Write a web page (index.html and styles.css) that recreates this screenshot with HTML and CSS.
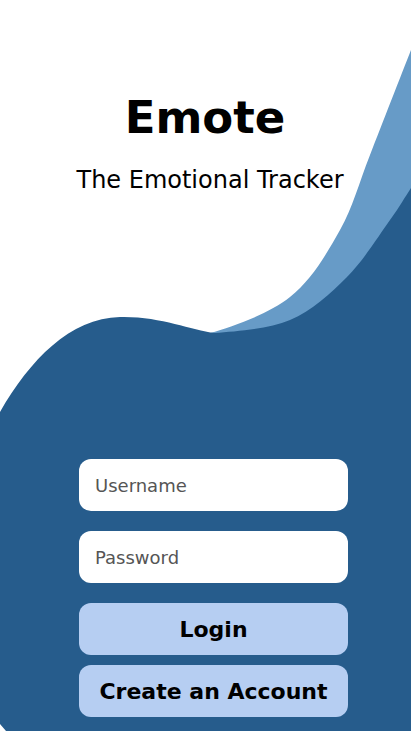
FILE: index.html
```html
<!DOCTYPE html>
<html lang="en">
<head>
<meta charset="utf-8">
<title>Emote</title>
<link rel="stylesheet" href="styles.css">
</head>
<body>
<div class="screen">
  <svg class="waves" width="411" height="731" viewBox="0 0 411 731" aria-hidden="true">
    <path class="wave-light" d="M205,334 L210,333 C233,326.5 268.3,314.2 290,297 C311.7,279.8 326.7,253.7 340,230 C353.3,206.3 358.2,185 370,155 C381.8,125 401.8,73.3 411,50 L411,731 L205,731 Z"/>
    <path class="wave-dark" d="M0,412 C30,360 70,318 120,317 C160,316 190,330 215,333 C235,331.3 268,329.3 290,320 C312,310.7 330.3,293.7 347,277 C363.7,260.3 379.3,234.8 390,220 C400.7,205.2 404.3,198 411,188 L411,731 L6,731 L0,724 Z"/>
  </svg>
  <div class="content">
    <header class="brand">
      <h1 class="title">Emote</h1>
      <p class="subtitle">The Emotional Tracker</p>
    </header>
    <form class="login-form">
      <div class="fields">
        <input class="field" type="text" placeholder="Username">
        <input class="field" type="password" placeholder="Password">
      </div>
      <div class="actions">
        <button class="btn" type="button">Login</button>
        <button class="btn" type="button">Create an Account</button>
      </div>
    </form>
  </div>
</div>
</body>
</html>
```

FILE: styles.css
```css
* {
  box-sizing: border-box;
}

html, body {
  margin: 0;
  padding: 0;
  background: #ffffff;
}

body {
  font-family: "DejaVu Sans", "Liberation Sans", sans-serif;
  color: #000000;
}

.screen {
  position: relative;
  width: 411px;
  height: 731px;
  overflow: hidden;
  background: #ffffff;
}

.waves {
  position: absolute;
  left: 0;
  top: 0;
  display: block;
}

.wave-light {
  fill: #679bc7;
}

.wave-dark {
  fill: #265c8c;
}

.content {
  position: relative;
  z-index: 1;
  display: flex;
  flex-direction: column;
}

.brand {
  display: flex;
  flex-direction: column;
  align-items: center;
  padding-top: 95px;
}

.title {
  margin: 0;
  font-size: 45px;
  line-height: 45px;
  font-weight: 700;
  letter-spacing: 0;
  padding-right: 1px;
}

.subtitle {
  margin: 28px 0 0 0;
  font-size: 24px;
  line-height: 24px;
  font-weight: 400;
  padding-left: 9px;
}

.login-form {
  margin: 267px 0 0 79px;
  width: 269px;
  display: flex;
  flex-direction: column;
  gap: 20px;
}

.fields {
  display: flex;
  flex-direction: column;
  gap: 20px;
}

.field {
  width: 269px;
  height: 52px;
  border: none;
  border-radius: 12px;
  background: #ffffff;
  padding: 0 16px;
  font-family: "DejaVu Sans", "Liberation Sans", sans-serif;
  font-size: 18px;
  color: #333333;
  outline: none;
}

.field::placeholder {
  color: #555555;
}

.actions {
  display: flex;
  flex-direction: column;
  gap: 10px;
}

.btn {
  width: 269px;
  height: 52px;
  border: none;
  border-radius: 12px;
  background: #b6cef2;
  color: #000000;
  font-family: "DejaVu Sans", "Liberation Sans", sans-serif;
  font-size: 22px;
  font-weight: 700;
  padding: 0;
  cursor: pointer;
}
```
